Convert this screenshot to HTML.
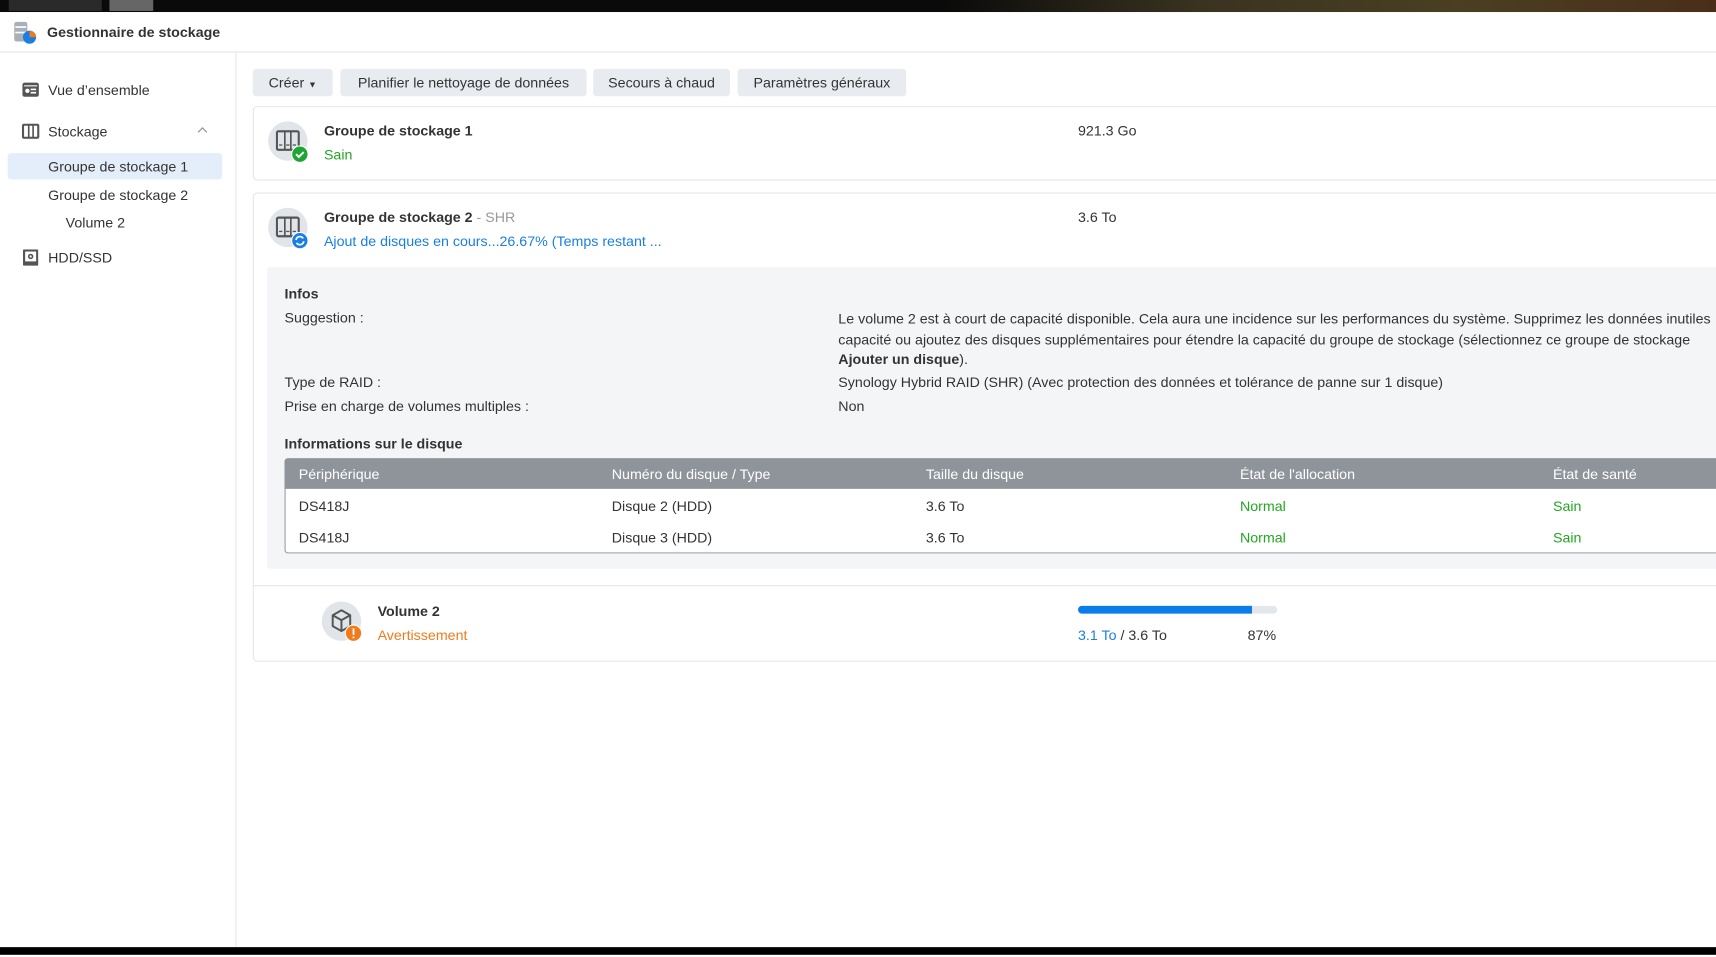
<!DOCTYPE html>
<html><head><meta charset="utf-8"><style>
html,body{margin:0;padding:0;width:1716px;height:957px;overflow:hidden;background:#fff}
#s{position:absolute;left:0;top:0;width:1568px;height:875px;transform:scale(1.0944,1.0937);transform-origin:0 0;font-family:"Liberation Sans",sans-serif;font-size:13px;color:#333}
.a{position:absolute;white-space:nowrap;line-height:16px;margin-top:1px}
.b{font-weight:bold}
.btn{position:absolute;top:63px;height:25px;background:#e8ecf1;border-radius:3px;line-height:26px;text-align:center;color:#333}
.g{color:#22a722}.bl{color:#1a7fe3}
.ic{position:absolute;width:36px;height:36px;border-radius:50%;background:#e1e5ea}
</style></head><body><div id="s">
<div style="position:absolute;left:0;top:0;width:1568px;height:11px;background:linear-gradient(90deg,#0a0a0a 0,#0a0a0a 55%,#3a3320 70%,#4a3f22 85%,#4a2e1a 100%)"></div>
<div style="position:absolute;left:8px;top:0;width:85px;height:10px;background:#2a2a2a"></div>
<div style="position:absolute;left:100px;top:0;width:40px;height:10px;background:#666"></div>
<div style="position:absolute;left:0;top:47px;width:1568px;height:1px;background:#e6e6e6"></div>
<svg style="position:absolute;left:12px;top:19px" width="22" height="22" viewBox="0 0 22 22"><rect x="1" y="1" width="12" height="18" rx="2" fill="#aab0b8"/><rect x="2" y="5" width="10" height="1.5" fill="#fff"/><rect x="2" y="10" width="10" height="1.5" fill="#fff"/><circle cx="15" cy="15" r="6" fill="#1a7fe3"/><path d="M15 9a6 6 0 0 1 6 6h-6z" fill="#f07b1a"/></svg>
<div class="a b" style="left:43px;top:21px">Gestionnaire de stockage</div>
<div style="position:absolute;left:215px;top:48px;width:1px;height:820px;background:#e6e6e6"></div>
<svg style="position:absolute;left:20px;top:75px" width="16" height="14"><rect x="0.5" y="0.5" width="15" height="13" rx="2" fill="#555"/><circle cx="5" cy="8" r="2" fill="#fff"/><rect x="8" y="6" width="5" height="1.5" fill="#fff"/><rect x="8" y="9" width="5" height="1.5" fill="#fff"/><rect x="2" y="3" width="12" height="1" fill="#fff"/></svg>
<div class="a" style="left:44px;top:74px">Vue d’ensemble</div>
<svg style="position:absolute;left:20px;top:113px" width="16" height="14"><rect x="1" y="1" width="14" height="12" rx="1" fill="none" stroke="#555" stroke-width="2"/><rect x="5.5" y="1" width="1.5" height="12" fill="#555"/><rect x="9.5" y="1" width="1.5" height="12" fill="#555"/></svg>
<div class="a" style="left:44px;top:112px">Stockage</div>
<svg style="position:absolute;left:180px;top:116px" width="10" height="6"><path d="M1 5l4-4 4 4" fill="none" stroke="#999" stroke-width="1.2"/></svg>
<div style="position:absolute;left:7px;top:140px;width:196px;height:24px;background:#e4eefa;border-radius:3px"></div>
<div class="a" style="left:44px;top:144px">Groupe de stockage 1</div>
<div class="a" style="left:44px;top:170px">Groupe de stockage 2</div>
<div class="a" style="left:60px;top:195px">Volume 2</div>
<svg style="position:absolute;left:21px;top:228px" width="14" height="15"><rect x="0" y="0" width="14" height="15" rx="1" fill="#555"/><rect x="2" y="2" width="10" height="9" fill="#fff"/><circle cx="7" cy="6.5" r="2.5" fill="#555"/><circle cx="7" cy="6.5" r="1" fill="#fff"/></svg>
<div class="a" style="left:44px;top:227px">HDD/SSD</div>
<div class="btn" style="left:231px;width:73px">Créer <span style="font-size:8px">▼</span></div>
<div class="btn" style="left:311px;width:225px">Planifier le nettoyage de données</div>
<div class="btn" style="left:542px;width:125px">Secours à chaud</div>
<div class="btn" style="left:674px;width:154px">Paramètres généraux</div>
<div style="position:absolute;left:231px;top:97px;width:1345px;height:66px;border:1px solid #e6e6e6;border-radius:4px"></div>
<div class="ic" style="left:245px;top:111px"></div>
<svg style="position:absolute;left:252px;top:119px" width="22" height="20"><rect x="1" y="1" width="20" height="17" rx="1.5" fill="none" stroke="#555" stroke-width="2"/><rect x="7.5" y="1" width="1.5" height="17" fill="#555"/><rect x="13" y="1" width="1.5" height="17" fill="#555"/><rect x="3" y="13" width="3" height="1.2" fill="#555"/><rect x="9.5" y="13" width="3" height="1.2" fill="#555"/><rect x="15.5" y="13" width="3" height="1.2" fill="#555"/></svg>
<svg style="position:absolute;left:266px;top:133px" width="16" height="16"><circle cx="8" cy="8" r="7.5" fill="#1fa532" stroke="#fff" stroke-width="1"/><path d="M4.5 8l2.5 2.5 4.5-4.5" fill="none" stroke="#fff" stroke-width="1.8"/></svg>
<div class="a b" style="left:296px;top:111px">Groupe de stockage 1</div>
<div class="a g" style="left:296px;top:133px">Sain</div>
<div class="a" style="left:985px;top:111px">921.3 Go</div>
<div style="position:absolute;left:231px;top:176px;width:1345px;height:427px;border:1px solid #e6e6e6;border-radius:4px"></div>
<div class="ic" style="left:245px;top:190px"></div>
<svg style="position:absolute;left:252px;top:198px" width="22" height="20"><rect x="1" y="1" width="20" height="17" rx="1.5" fill="none" stroke="#555" stroke-width="2"/><rect x="7.5" y="1" width="1.5" height="17" fill="#555"/><rect x="13" y="1" width="1.5" height="17" fill="#555"/><rect x="3" y="13" width="3" height="1.2" fill="#555"/><rect x="9.5" y="13" width="3" height="1.2" fill="#555"/><rect x="15.5" y="13" width="3" height="1.2" fill="#555"/></svg>
<svg style="position:absolute;left:266px;top:212px" width="16" height="16"><circle cx="8" cy="8" r="7.5" fill="#1a7fe3" stroke="#fff" stroke-width="1"/><path d="M4.5 7.5a3.5 3.5 0 0 1 6.5-1.5M11.5 8.5a3.5 3.5 0 0 1-6.5 1.5" fill="none" stroke="#fff" stroke-width="1.5"/></svg>
<div class="a" style="left:296px;top:190px"><b>Groupe de stockage 2</b> <span style="color:#999">- SHR</span></div>
<div class="a bl" style="left:296px;top:212px">Ajout de disques en cours...26.67% (Temps restant ...</div>
<div class="a" style="left:985px;top:190px">3.6 To</div>
<div style="position:absolute;left:244px;top:244px;width:1330px;height:276px;background:#f4f5f7;border-radius:3px"></div>
<div class="a b" style="left:260px;top:260px">Infos</div>
<div class="a" style="left:260px;top:282px">Suggestion :</div>
<div class="a" style="left:766px;top:282px;line-height:18.5px">Le volume 2 est à court de capacité disponible. Cela aura une incidence sur les performances du système. Supprimez les données inutiles<br>capacité ou ajoutez des disques supplémentaires pour étendre la capacité du groupe de stockage (sélectionnez ce groupe de stockage<br><b>Ajouter un disque</b>).</div>
<div class="a" style="left:260px;top:341px">Type de RAID :</div>
<div class="a" style="left:766px;top:341px">Synology Hybrid RAID (SHR) (Avec protection des données et tolérance de panne sur 1 disque)</div>
<div class="a" style="left:260px;top:363px">Prise en charge de volumes multiples :</div>
<div class="a" style="left:766px;top:363px">Non</div>
<div class="a b" style="left:260px;top:397px">Informations sur le disque</div>
<div style="position:absolute;left:260px;top:419px;width:1320px;height:85px;background:#fff;border:1px solid #9a9ea5;border-radius:3px"></div>
<div style="position:absolute;left:260px;top:419px;width:1322px;height:28px;background:#8f949b;border-radius:3px 3px 0 0"></div>
<div class="a" style="left:273px;top:425px;color:#fff">Périphérique</div>
<div class="a" style="left:559px;top:425px;color:#fff">Numéro du disque / Type</div>
<div class="a" style="left:846px;top:425px;color:#fff">Taille du disque</div>
<div class="a" style="left:1133px;top:425px;color:#fff">État de l'allocation</div>
<div class="a" style="left:1419px;top:425px;color:#fff">État de santé</div>
<div class="a" style="left:273px;top:454px">DS418J</div><div class="a" style="left:559px;top:454px">Disque 2 (HDD)</div><div class="a" style="left:846px;top:454px">3.6 To</div><div class="a g" style="left:1133px;top:454px">Normal</div><div class="a g" style="left:1419px;top:454px">Sain</div>
<div class="a" style="left:273px;top:483px">DS418J</div><div class="a" style="left:559px;top:483px">Disque 3 (HDD)</div><div class="a" style="left:846px;top:483px">3.6 To</div><div class="a g" style="left:1133px;top:483px">Normal</div><div class="a g" style="left:1419px;top:483px">Sain</div>
<div style="position:absolute;left:232px;top:535px;width:1340px;height:1px;background:#e6e6e6"></div>
<div class="ic" style="left:294px;top:550px"></div>
<svg style="position:absolute;left:302px;top:557px" width="20" height="22"><path d="M10 1l8 4.5v10L10 20l-8-4.5v-10z M2 5.5l8 4.5 8-4.5 M10 10v10" fill="none" stroke="#555" stroke-width="1.8" stroke-linejoin="round"/></svg>
<svg style="position:absolute;left:315px;top:571px" width="16" height="16"><circle cx="8" cy="8" r="7.5" fill="#f07b1a" stroke="#fff" stroke-width="1"/><rect x="7.2" y="3.5" width="1.6" height="6" fill="#fff"/><rect x="7.2" y="11" width="1.6" height="1.6" fill="#fff"/></svg>
<div class="a b" style="left:345px;top:550px">Volume 2</div>
<div class="a" style="left:345px;top:572px;color:#f07b1a">Avertissement</div>
<div style="position:absolute;left:985px;top:554px;width:182px;height:7px;background:#e3e6ea;border-radius:4px"></div>
<div style="position:absolute;left:985px;top:554px;width:159px;height:7px;background:#0a7de8;border-radius:4px 0 0 4px"></div>
<div class="a" style="left:985px;top:572px"><span class="bl">3.1 To</span> / 3.6 To</div>
<div class="a" style="left:1140px;top:572px">87%</div>
<div style="position:absolute;left:0;top:866px;width:1568px;height:7px;background:#000"></div>
</div></body></html>
